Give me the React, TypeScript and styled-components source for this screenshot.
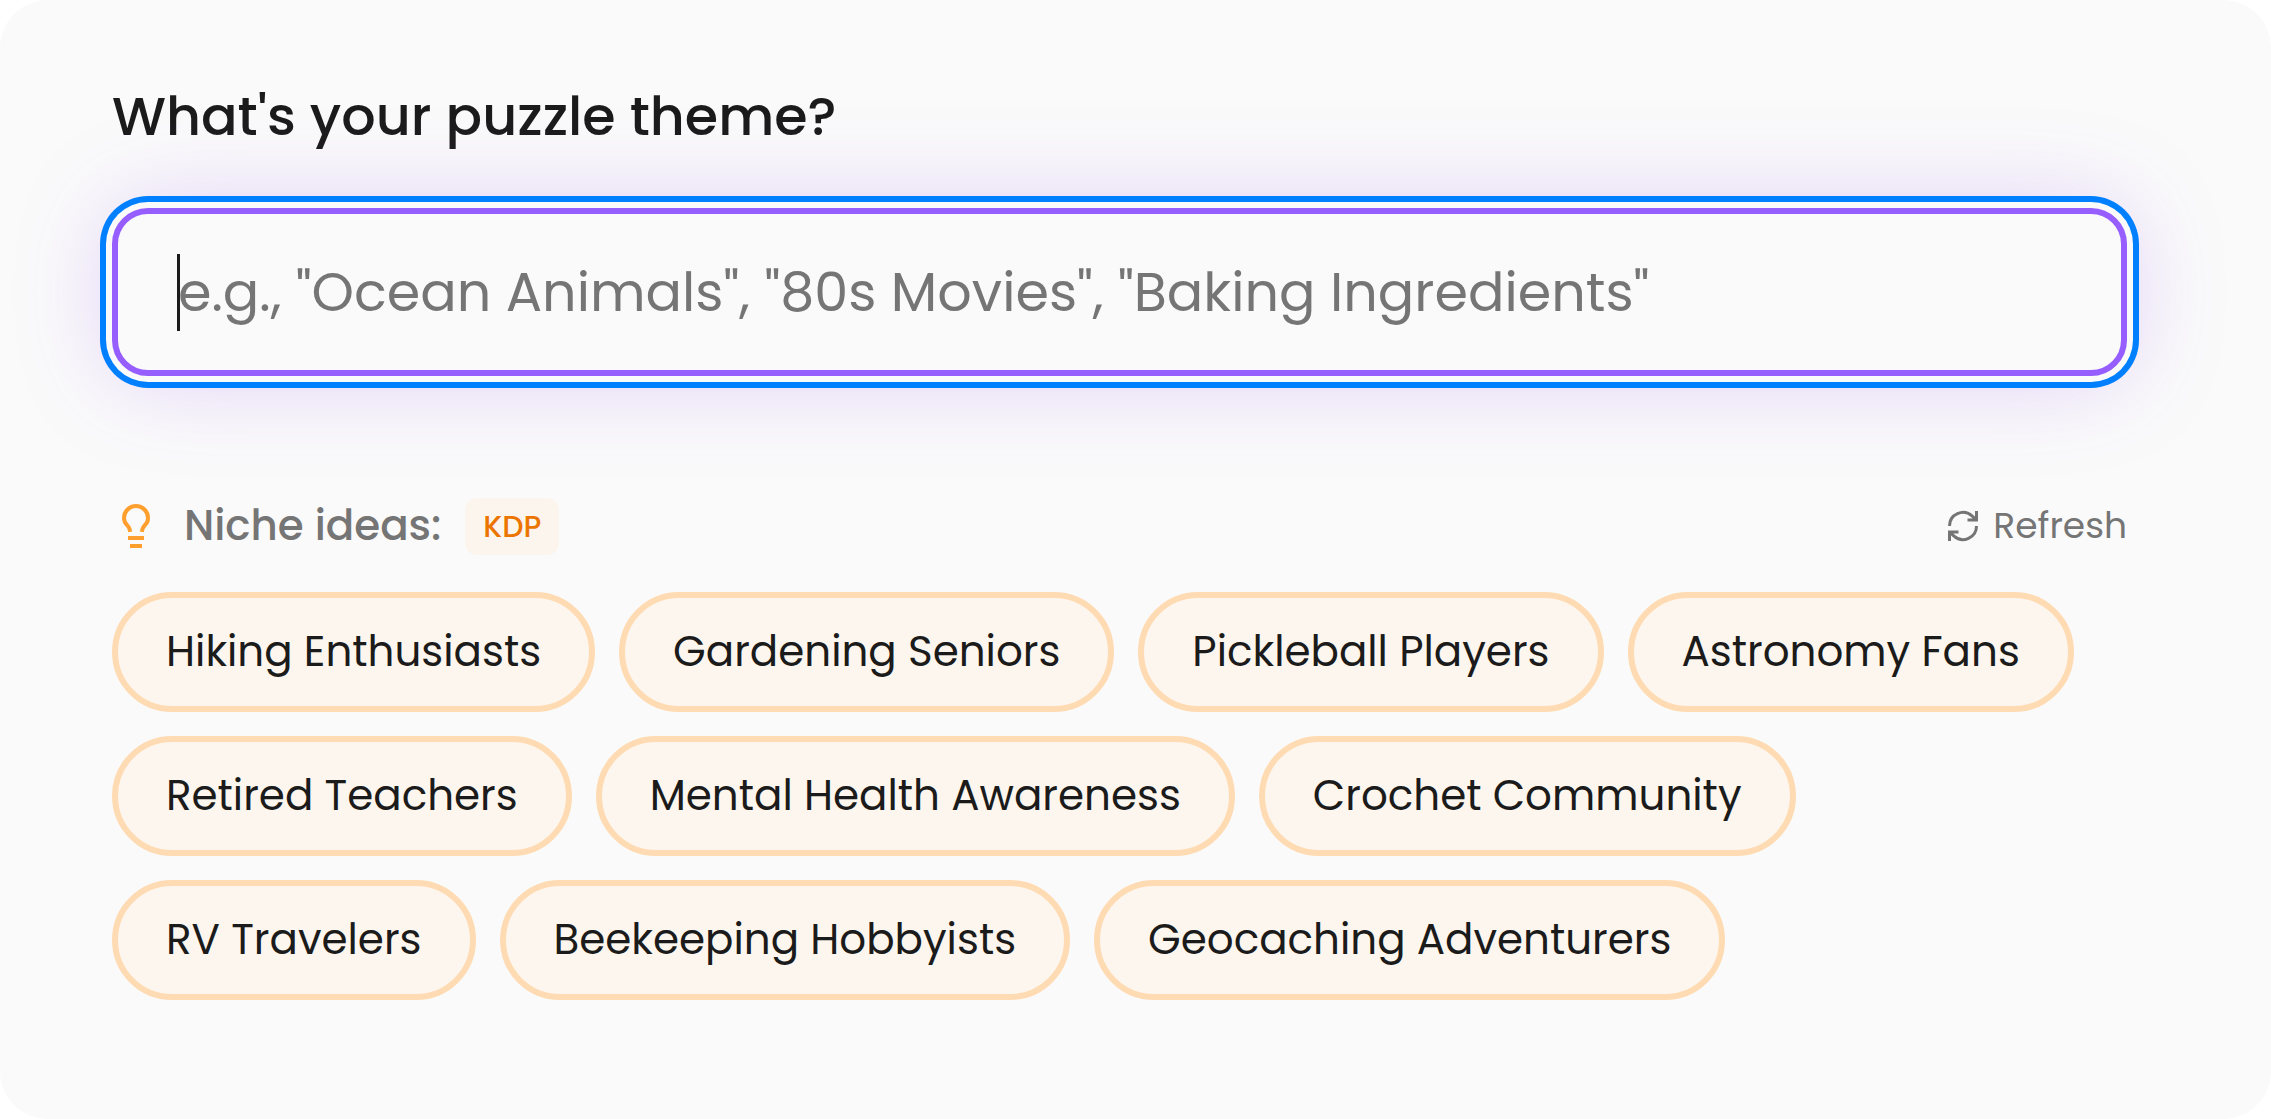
import React, { useState } from 'react';
import styled, { createGlobalStyle } from 'styled-components';

const GlobalStyle = createGlobalStyle`
  *, *::before, *::after { box-sizing: border-box; }
  body {
    margin: 0;
    background: #ffffff;
    color: #1b1b1b;
    font-family: Poppins, Inter, "Liberation Sans", sans-serif;
  }
  button, input { font: inherit; color: inherit; }
`;

const Card = styled.main`
  min-height: 100vh;
  padding: 76px 144px 119px 112px;
  border-radius: 48px;
  background: #fafafa;
`;

const ThemeLabel = styled.label`
  display: block;
  margin-bottom: 51px;
  font-size: 54px;
  font-weight: 500;
  line-height: 81px;
`;

const Field = styled.div`
  position: relative;
  margin-bottom: 120px;
`;

const ThemeInput = styled.input`
  display: block;
  width: 100%;
  height: 168px;
  padding: 0 60px;
  border: 6px solid #965eff;
  border-radius: 36px;
  background: #fafafa;
  font-size: 54px;
  line-height: 81px;
  outline: none;
  caret-color: ${({ value }) => (value ? '#1b1b1b' : 'transparent')};
  box-shadow: 0 0 0 6px #fafafa, 0 0 0 12px #0080ff, 0 0 96px 0 rgba(150, 84, 245, 0.28);

  &::placeholder { color: #757575; opacity: 1; }
`;

const Caret = styled.span`
  position: absolute;
  top: 46px;
  left: 65px;
  width: 3px;
  height: 77px;
  background: #1b1b1b;
  pointer-events: none;
`;

const IdeasHeader = styled.div`
  display: flex;
  align-items: center;
  justify-content: space-between;
  height: 60px;
  margin-bottom: 36px;
  color: #757575;
`;

const IdeasTitle = styled.div`
  display: flex;
  align-items: center;
  gap: 24px;
`;

const IdeasHeading = styled.h2`
  margin: 0;
  font-size: 42px;
  font-weight: 500;
  line-height: 60px;
`;

const Badge = styled.span`
  padding: 6px 18px;
  border-radius: 12px;
  background: #fcf5ee;
  color: #ec7500;
  font-size: 30px;
  font-weight: 500;
  line-height: 45px;
`;

const RefreshButton = styled.button`
  display: flex;
  align-items: center;
  gap: 12px;
  padding: 0;
  border: 0;
  background: none;
  font-size: 36px;
  line-height: 54px;
  cursor: pointer;
`;

const BulbIcon = styled.svg`
  width: 48px;
  height: 48px;
  fill: none;
  stroke: #ffa02e;
  stroke-width: 2;
  stroke-linecap: square;
`;

const RefreshIcon = styled.svg`
  width: 36px;
  height: 36px;
  fill: none;
  stroke: currentColor;
  stroke-width: 2;
`;

const IdeaList = styled.div`
  display: flex;
  flex-wrap: wrap;
  gap: 24px;
`;

const IdeaChip = styled.button`
  height: 120px;
  padding: 0 48px;
  border: 6px solid #ffdbb3;
  border-radius: 60px;
  background: #fcf6ee;
  font-size: 42px;
  line-height: 60px;
  cursor: pointer;
`;

const ideas: string[] = [
  'Hiking Enthusiasts',
  'Gardening Seniors',
  'Pickleball Players',
  'Astronomy Fans',
  'Retired Teachers',
  'Mental Health Awareness',
  'Crochet Community',
  'RV Travelers',
  'Beekeeping Hobbyists',
  'Geocaching Adventurers',
];

export default function App() {
  const [theme, setTheme] = useState('');

  return (
    <>
      <GlobalStyle />
      <Card>
        <ThemeLabel htmlFor="theme">What's your puzzle theme?</ThemeLabel>
        <Field>
          <ThemeInput
            id="theme"
            type="text"
            autoFocus
            autoComplete="off"
            value={theme}
            onChange={(event) => setTheme(event.target.value)}
            placeholder={'e.g., "Ocean Animals", "80s Movies", "Baking Ingredients"'}
          />
          {theme === '' && <Caret />}
        </Field>
        <IdeasHeader>
          <IdeasTitle>
            <BulbIcon viewBox="0 0 24 24" aria-hidden>
              <path d="M9 18h6M10 22h4" />
              <path d="M15.09 14c.18-.98.65-1.74 1.41-2.5A4.65 4.65 0 0 0 18 8 6 6 0 0 0 6 8c0 1 .23 2.23 1.5 3.5A4.61 4.61 0 0 1 8.91 14" />
            </BulbIcon>
            <IdeasHeading>Niche ideas:</IdeasHeading>
            <Badge>KDP</Badge>
          </IdeasTitle>
          <RefreshButton type="button">
            <RefreshIcon viewBox="0 0 24 24" aria-hidden>
              <path d="M21 2v6h-6M3 12a9 9 0 0 1 15-6.7L21 8" />
              <path d="M3 22v-6h6M21 12a9 9 0 0 1-15 6.7L3 16" />
            </RefreshIcon>
            Refresh
          </RefreshButton>
        </IdeasHeader>
        <IdeaList>
          {ideas.map((idea) => (
            <IdeaChip key={idea} type="button" onClick={() => setTheme(idea)}>
              {idea}
            </IdeaChip>
          ))}
        </IdeaList>
      </Card>
    </>
  );
}
